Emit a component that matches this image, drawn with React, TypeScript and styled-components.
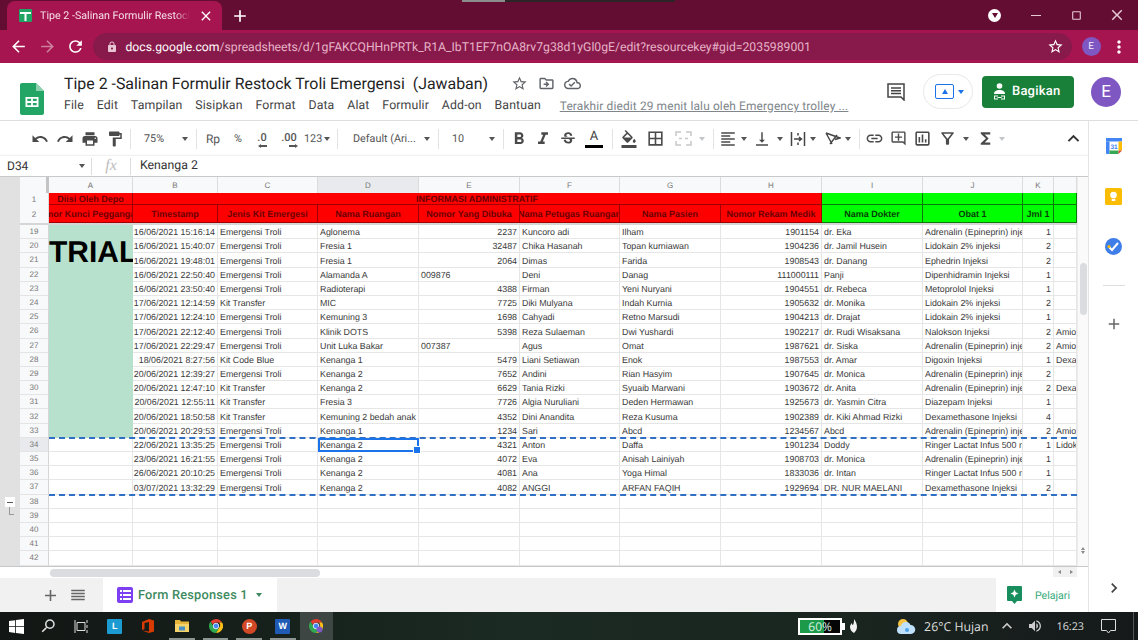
import React from "react";
import styled, { createGlobalStyle } from "styled-components";
import {
  MdAdd, MdArrowBack, MdArrowForward, MdBorderAll, MdChevronRight, MdClose, MdExpandLess, MdFormatAlignLeft,
  MdFormatBold, MdFormatColorFill, MdFormatItalic, MdFormatPaint, MdFunctions, MdLink, MdLock, MdMoreVert,
  MdOutlineAddComment, MdOutlineCloudDone, MdOutlineCropSquare, MdOutlineDriveFileMove, MdOutlineFilterAlt,
  MdOutlineInsertChart, MdPrint, MdRedo, MdRefresh, MdReorder, MdStarBorder, MdStrikethroughS, MdUndo,
  MdVerticalAlignBottom, MdSearch, MdKeyboardArrowUp, MdVolumeUp
} from "react-icons/md";

const GlobalStyle = createGlobalStyle`
  html, body { margin: 0; padding: 0; overflow: hidden; }
  body { font-family: Roboto, "Liberation Sans", sans-serif; text-rendering: geometricPrecision; }
  * { box-sizing: border-box; }
`;

const Page = styled.div`
  width: 1138px;
  height: 640px;
  display: flex;
  flex-direction: column;
  background: #fff;
  overflow: hidden;
`;

/* browser chrome */
const TabStrip = styled.div`
  height: 30px;
  flex: none;
  position: relative;
  display: flex;
  align-items: flex-end;
  padding-left: 7px;
  background: #640d33;
`;
const TopSliver = styled.div`
  position: absolute;
  top: 0;
  left: 462px;
  width: 213px;
  height: 2px;
  background: linear-gradient(90deg, #8c8c8c 20%, #2c2328 20%);
`;
const Tab = styled.div`
  width: 215px;
  height: 29px;
  display: flex;
  align-items: center;
  padding: 0 8px 0 12px;
  background: #a6154f;
  border-radius: 8px 8px 0 0;
  color: #f6dfe8;
  font-size: 10.7px;
`;
const TabTitle = styled.span`
  width: 151px;
  margin: 0 8px;
  overflow: hidden;
  white-space: nowrap;
  mask-image: linear-gradient(90deg, #000 90%, transparent);
`;
const NewTab = styled.div`
  margin: 0 0 4px 8px;
  color: #fff;
  font-size: 20px;
  display: flex;
`;
const WindowControls = styled.div`
  margin-left: auto;
  height: 30px;
  display: flex;
  align-items: center;
  color: #e7c9d5;
`;
const ProfileDot = styled.div`
  width: 13px;
  height: 13px;
  margin-right: 15px;
  border-radius: 50%;
  background: #fff;
  display: flex;
  align-items: center;
  justify-content: center;
  &::after {
    content: "";
    border-top: 5px solid #640d33;
    border-left: 3.5px solid transparent;
    border-right: 3.5px solid transparent;
  }
`;
const WinButton = styled.div<{ $w: number }>`
  width: ${(p) => p.$w}px;
  display: flex;
  align-items: center;
  justify-content: center;
`;
const MinLine = styled.div`
  width: 10px;
  height: 1px;
  background: #e7c9d5;
`;

const NavBar = styled.div`
  height: 33px;
  flex: none;
  display: flex;
  align-items: center;
  padding: 0 0 0 9px;
  background: #a6154f;
  color: #fff;
`;
const NavIcon = styled.div<{ $dim?: boolean }>`
  width: 28.5px;
  display: flex;
  font-size: 19px;
  opacity: ${(p) => (p.$dim ? 0.45 : 1)};
`;
const Omnibox = styled.div`
  margin-left: -2px;
  width: 979px;
  height: 27px;
  border-radius: 14px;
  display: flex;
  align-items: center;
  padding: 0 8px 0 13px;
  background: #881a4b;
  font-size: 12.2px;
  color: #e6b3c8;
`;
const LockIcon = styled.div`
  display: flex;
  font-size: 12px;
  color: #e6c6d3;
  margin-right: 8px;
`;
const Host = styled.span`
  color: #fff;
`;
const OmniStar = styled.div`
  margin-left: auto;
  display: flex;
  font-size: 17px;
  color: #fff;
`;
const SmallAvatar = styled.div`
  width: 19px;
  height: 19px;
  margin-left: 10px;
  border-radius: 50%;
  background: #7e57c2;
  color: #f3eefc;
  font-size: 10px;
  display: flex;
  align-items: center;
  justify-content: center;
`;
const Kebab = styled.div`
  margin-left: 8px;
  display: flex;
  font-size: 20px;
`;

/* sheets header */
const Header = styled.div`
  height: 58px;
  flex: none;
  display: flex;
  align-items: flex-start;
  border-bottom: 1px solid #dedede;
`;
const LogoSlot = styled.div`
  width: 64px;
  flex: none;
  padding: 20px 0 0 20px;
`;
const HeaderCenter = styled.div`
  padding-top: 8px;
  display: flex;
  flex-direction: column;
`;
const TitleRow = styled.div`
  height: 24px;
  display: flex;
  align-items: center;
  color: #5f6368;
`;
const Title = styled.div`
  font-size: 15.9px;
  color: #1f1f1f;
  white-space: pre;
  margin-right: 23px;
`;
const TitleIcon = styled.div`
  width: 26.5px;
  display: flex;
  font-size: 17px;
`;
const MenuRow = styled.div`
  height: 22px;
  display: flex;
  align-items: center;
  gap: 12.8px;
  font-size: 12.3px;
  letter-spacing: 0.14px;
  color: #444;
`;
const LastEdit = styled.span`
  margin-left: 6px;
  color: #80868b;
  text-decoration: underline;
  font-size: 11.9px;
`;
const HeaderRight = styled.div`
  margin-left: auto;
  height: 57px;
  padding-right: 17px;
  display: flex;
  align-items: center;
`;
const Present = styled.div`
  width: 50px;
  height: 35px;
  margin: 0 9px 0 18px;
  border: 1px solid #e8e8e8;
  border-radius: 18px;
  display: flex;
  align-items: center;
  padding-left: 11px;
  gap: 4px;
`;
const PresentBox = styled.div`
  width: 19px;
  height: 15px;
  border: 1.5px solid #1a73e8;
  border-radius: 2px;
  color: #1a73e8;
  display: flex;
  align-items: center;
  justify-content: center;
  &::after {
    content: "";
    border-bottom: 5px solid #1a73e8;
    border-left: 3.5px solid transparent;
    border-right: 3.5px solid transparent;
  }
`;
const ShareButton = styled.div`
  width: 92px;
  height: 32px;
  border-radius: 4px;
  background: #188038;
  color: #fff;
  font-size: 13px;
  font-weight: 500;
  letter-spacing: 0.2px;
  display: flex;
  align-items: center;
  gap: 6px;
  padding-left: 11px;
`;
const Avatar = styled.div`
  width: 30px;
  height: 30px;
  margin-left: 17px;
  border-radius: 50%;
  background: #7e57c2;
  color: #fff;
  font-size: 17px;
  display: flex;
  align-items: center;
  justify-content: center;
`;

/* workspace */
const Workspace = styled.div`
  flex: 1;
  min-height: 0;
  display: flex;
`;
const WorkArea = styled.div`
  width: 1088px;
  flex: none;
  display: flex;
  flex-direction: column;
`;
const Toolbar = styled.div`
  height: 35px;
  flex: none;
  display: flex;
  align-items: center;
  padding: 0 3px 0 27px;
  color: #4a4a4a;
  box-shadow: inset 0 -2px 2px -1px #eee;
`;
const Tool = styled.div<{ $w: number; $left?: boolean; $pad?: number }>`
  width: ${(p) => p.$w}px;
  height: 24px;
  flex: none;
  position: relative;
  display: flex;
  align-items: center;
  justify-content: ${(p) => (p.$left ? "flex-start" : "center")};
  padding-left: ${(p) => p.$pad ?? 0}px;
  font-size: 18px;
`;
const ToolText = styled.span<{ $pad?: number; $big?: boolean }>`
  font-size: ${(p) => (p.$big ? 12 : 10.8)}px;
  color: #555;
  padding-left: ${(p) => p.$pad ?? 0}px;
  white-space: nowrap;
`;
const Caret = styled.i<{ $light?: boolean; $blue?: boolean }>`
  display: block;
  flex: none;
  border-top: 4px solid ${(p) => (p.$blue ? "#1a73e8" : p.$light ? "#c4c7c9" : "#555")};
  border-left: 3.5px solid transparent;
  border-right: 3.5px solid transparent;
`;
const CaretEnd = styled(Caret)<{ $r?: number }>`
  position: absolute;
  right: ${(p) => p.$r ?? 5}px;
  top: 10px;
`;
const Sep = styled.div<{ $m?: number }>`
  width: 1px;
  height: 20px;
  flex: none;
  margin: 0 ${(p) => p.$m ?? 3}px;
  background: #e3e3e3;
`;
const Collapse = styled.div`
  margin-left: auto;
  width: 24px;
  display: flex;
  justify-content: center;
  font-size: 23px;
  color: #333;
`;
const DecimalWrap = styled.div`
  position: relative;
  margin-top: -3px;
  font-size: 11px;
  font-weight: 500;
  color: #555;
`;
const DecimalArrow = styled.span<{ $right?: boolean }>`
  position: absolute;
  bottom: -3px;
  left: ${(p) => (p.$right ? "8px" : "3px")};
  width: 7px;
  height: 1.5px;
  background: #555;
  &::after {
    content: "";
    position: absolute;
    top: -1.5px;
    ${(p) => (p.$right ? "right: -2px" : "left: -2px")};
    border-top: 2.2px solid transparent;
    border-bottom: 2.2px solid transparent;
    ${(p) => (p.$right ? "border-left: 3px solid #555" : "border-right: 3px solid #555")};
  }
`;
const TextColor = styled.div`
  display: flex;
  flex-direction: column;
  align-items: center;
  font-size: 13px;
  line-height: 13px;
  color: #444;
  &::after {
    content: "";
    width: 18px;
    height: 3px;
    margin-top: 2px;
    background: #000;
  }
`;
const FormulaBar = styled.div`
  height: 21px;
  flex: none;
  display: flex;
  align-items: center;
  font-size: 12px;
  color: #333;
  border-bottom: 1px solid #c9c9c9;
`;
const NameBox = styled.div`
  width: 91px;
  flex: none;
  padding: 0 6px 0 7px;
  display: flex;
  align-items: center;
  justify-content: space-between;
`;
const FxMark = styled.div`
  width: 38px;
  text-align: center;
  font: italic 16px "Liberation Serif", serif;
  color: #bdbdbd;
`;
const FormulaSep = styled.div`
  width: 1px;
  height: 17px;
  background: #ddd;
`;
const FormulaText = styled.div`
  padding-left: 9px;
  font-size: 12.3px;
`;

/* grid */
const SheetRow = styled.div`
  height: 389px;
  flex: none;
  display: flex;
`;
const OutlineGutter = styled.div`
  width: 20px;
  flex: none;
  padding: 320px 0 0 5px;
  background: #e1e1e1;
`;
const OutlineMinus = styled.div`
  width: 10px;
  height: 10px;
  background: #fff;
  display: flex;
  align-items: center;
  justify-content: center;
  &::after {
    content: "";
    width: 6px;
    height: 1px;
    background: #555;
  }
`;
const OutlineTail = styled.div`
  width: 5px;
  height: 8px;
  margin-left: 4px;
  border-left: 1px solid #999;
  border-bottom: 1px solid #999;
`;
const SheetBody = styled.div`
  width: 1057px;
  flex: none;
  display: flex;
  flex-direction: column;
`;
const columns = "29px 84px 85px 100px 101px 101px 100px 101px 101px 101px 100px 31px 23px";
const HeaderGrid = styled.div`
  display: grid;
  grid-template-columns: ${columns};
  grid-template-rows: 16px 12px 18px;
  font-family: "Liberation Sans", Arial, sans-serif;
  border-bottom: 2px solid #d6d6d6;
  height: 48px;
`;
const Corner = styled.div`
  background: #f8f9fa;
  border-right: 3px solid #c4c4c4;
`;
const ColLetter = styled.div<{ $on?: boolean }>`
  display: flex;
  align-items: center;
  justify-content: center;
  font-size: 8px;
  color: #777;
  background: ${(p) => (p.$on ? "#e8eaed" : "#f8f9fa")};
  border-right: 1px solid #dcdcdc;
`;
const HeadNum = styled.div`
  display: flex;
  align-items: center;
  justify-content: center;
  font-size: 8px;
  color: #777;
  background: #f8f9fa;
  border-right: 1px solid #dcdcdc;
`;
const HeadCell = styled.div<{ $green?: boolean; $span?: number; $nudge?: number }>`
  grid-column: span ${(p) => p.$span ?? 1};
  display: flex;
  align-items: center;
  justify-content: center;
  padding: 1px ${(p) => p.$nudge ?? 0}px 0 0;
  overflow: hidden;
  white-space: nowrap;
  font-size: 9px;
  font-weight: bold;
  color: ${(p) => (p.$green ? "#063f06" : "#6b0000")};
  background: ${(p) => (p.$green ? "#00ff00" : "#ff0000")};
  border-right: 1px solid ${(p) => (p.$green ? "#0b7a0b" : "#a00000")};
  border-bottom: 1px solid ${(p) => (p.$green ? "#0b7a0b" : "#a00000")};
`;
const DataWrap = styled.div`
  position: relative;
`;
const DataGrid = styled.div`
  display: grid;
  grid-template-columns: ${columns};
  grid-auto-rows: 14.2px;
  font-family: "Liberation Sans", Arial, sans-serif;
  font-size: 8.85px;
  line-height: 12px;
  color: #3a3a3a;
`;
const RowNum = styled.div<{ $on?: boolean }>`
  display: flex;
  align-items: center;
  justify-content: center;
  padding-top: 1px;
  font-size: 8px;
  color: #777;
  background: ${(p) => (p.$on ? "#e8eaed" : "#f8f9fa")};
  border-right: 1px solid #d5d5d5;
  border-bottom: 1px solid #e4e4e4;
`;
const Cell = styled.div<{ $right?: boolean; $active?: boolean }>`
  position: relative;
  display: flex;
  align-items: flex-end;
  justify-content: ${(p) => (p.$right ? "flex-end" : "flex-start")};
  padding: 0 2px;
  white-space: nowrap;
  min-width: 0;
  overflow: ${(p) => (p.$active ? "visible" : "hidden")};
  border-right: 1px solid #e6e6e6;
  border-bottom: 1px solid #e6e6e6;
  ${(p) =>
    p.$active &&
    `
    z-index: 2;
    outline: 2px solid #1a73e8;
    outline-offset: -2px;
    &::after {
      content: "";
      position: absolute;
      right: -3px;
      bottom: -3px;
      width: 6px;
      height: 6px;
      background: #1a73e8;
      border: 1px solid #fff;
    }
  `}
`;
const MergedTrial = styled.div`
  grid-row: span 15;
  background: #b7e1cd;
  padding-top: 13px;
  font-size: 30px;
  line-height: 30px;
  font-weight: bold;
  color: #000;
  overflow: hidden;
  white-space: nowrap;
`;
const CopyLine = styled.div<{ $row: number }>`
  position: absolute;
  z-index: 1;
  left: 29px;
  right: 0;
  top: ${(p) => p.$row * 14.2 - 1}px;
  border-top: 2px dashed #2f6fc4;
`;
const VScroll = styled.div`
  width: 11px;
  flex: none;
  display: flex;
  flex-direction: column;
  align-items: center;
  padding-top: 86px;
  background: #fafafa;
  border-left: 1px solid #ececec;
`;
const VThumb = styled.div`
  width: 7px;
  height: 52px;
  border-radius: 4px;
  background: #dadce0;
`;
const VArrows = styled.div`
  margin-top: auto;
  height: 26px;
  display: flex;
  flex-direction: column;
  justify-content: space-between;
  align-items: center;
  padding: 7px 0 12px;
`;
const TinyUp = styled.i`
  border-bottom: 3px solid #888;
  border-left: 2.5px solid transparent;
  border-right: 2.5px solid transparent;
`;
const TinyDown = styled.i`
  border-top: 3px solid #888;
  border-left: 2.5px solid transparent;
  border-right: 2.5px solid transparent;
`;
const HScrollRow = styled.div`
  height: 12px;
  flex: none;
  display: flex;
  padding: 2px 0 1px 50px;
  background: #fff;
  border-top: 1px solid #c8c8c8;
`;
const HThumb = styled.div`
  width: 270px;
  height: 8px;
  border-radius: 4px;
  background: #dadce0;
`;
const HArrows = styled.div`
  margin: -2px 11px 0 auto;
  width: 24px;
  display: flex;
  align-items: center;
  justify-content: space-around;
  background: #f1f1f1;
`;
const TinyLeft = styled.i`
  border-right: 3px solid #888;
  border-top: 2.5px solid transparent;
  border-bottom: 2.5px solid transparent;
`;
const TinyRight = styled.i`
  border-left: 3px solid #888;
  border-top: 2.5px solid transparent;
  border-bottom: 2.5px solid transparent;
`;

/* sheet tabs */
const TabsBar = styled.div`
  height: 34px;
  flex: none;
  display: flex;
  align-items: stretch;
  background: #f1f1f1;
`;
const TabsTool = styled.div<{ $w: number; $ml?: number }>`
  width: ${(p) => p.$w}px;
  margin-left: ${(p) => p.$ml ?? 0}px;
  flex: none;
  display: flex;
  align-items: center;
  justify-content: center;
  font-size: 18px;
  color: #666;
`;
const SheetTab = styled.div`
  width: 174px;
  margin-left: 12px;
  display: flex;
  align-items: center;
  padding-left: 14px;
  background: #fff;
  color: #3e8a60;
  font-size: 12.8px;
  font-weight: 500;
  letter-spacing: 0.2px;
`;
const FormBadge = styled.div`
  width: 16px;
  height: 16px;
  margin-right: 5px;
  border-radius: 2px;
  background: #7e3ff2;
  color: #fff;
  display: flex;
  align-items: center;
  justify-content: center;
`;
const GreenCaret = styled(Caret)`
  margin-left: 8px;
  border-top-color: #3e8a60;
`;
const LearnBox = styled.div`
  width: 92px;
  margin-left: auto;
  display: flex;
  align-items: center;
  padding-left: 11px;
  background: #fff;
  color: #34a87a;
  font-size: 10.6px;
  gap: 13px;
`;

/* side panel */
const SidePanel = styled.div`
  flex: 1;
  display: flex;
  flex-direction: column;
  align-items: center;
  padding-top: 17px;
  border-left: 1px solid #e4e4e4;
`;
const SideIcon = styled.div<{ $mb: number }>`
  display: flex;
  margin-bottom: ${(p) => p.$mb}px;
`;
const SideDivider = styled.div`
  width: 22px;
  height: 1px;
  background: #e0e0e0;
  margin-bottom: 29px;
`;
const SidePlus = styled.div`
  display: flex;
  font-size: 18px;
  color: #666;
`;
const SideChevron = styled.div`
  margin-top: auto;
  margin-bottom: 14px;
  display: flex;
  font-size: 20px;
  color: #444;
`;

/* windows taskbar */
const Taskbar = styled.div`
  height: 28px;
  flex: none;
  display: flex;
  align-items: center;
  background: linear-gradient(90deg, #121614, #1b2a23 45%, #1a2520 75%, #15191a);
  color: #eee;
`;
const TaskSlot = styled.div<{ $w?: number; $active?: boolean; $run?: boolean }>`
  position: relative;
  width: ${(p) => p.$w ?? 33.6}px;
  height: 28px;
  flex: none;
  display: flex;
  align-items: center;
  justify-content: center;
  background: ${(p) => (p.$active ? "#3d4643" : "transparent")};
  ${(p) =>
    p.$run &&
    `
    &::after {
      content: "";
      position: absolute;
      left: 4px;
      right: 4px;
      bottom: 0;
      height: 2px;
      background: #8d9692;
    }
  `}
`;
const AppTile = styled.div<{ $bg: string; $round?: boolean }>`
  width: 15px;
  height: 15px;
  display: flex;
  align-items: center;
  justify-content: center;
  background: ${(p) => p.$bg};
  border-radius: ${(p) => (p.$round ? "50%" : "1px")};
  color: #fff;
  font: bold 9px "Liberation Sans", sans-serif;
`;
const SearchGlass = styled.div`
  display: flex;
  color: #ddd;
  transform: scaleX(-1);
`;
const Tray = styled.div`
  margin-left: auto;
  display: flex;
  align-items: center;
  height: 28px;
  padding-right: 4px;
`;
const Battery = styled.div`
  width: 44px;
  height: 17px;
  border: 2px solid #fff;
  background: linear-gradient(90deg, #1c9a4a 60%, #050505 60%);
  font: 12px "Open Sans", sans-serif;
  color: #d8efe0;
  display: flex;
  align-items: center;
  justify-content: center;
`;
const BatteryCap = styled.div`
  width: 3px;
  height: 7px;
  background: #fff;
`;
const TrayText = styled.div<{ $ml: number; $size?: number }>`
  margin-left: ${(p) => p.$ml}px;
  font: ${(p) => p.$size ?? 13}px "Open Sans", sans-serif;
  color: #ddd;
  white-space: nowrap;
`;
const TrayIcon = styled.div<{ $ml: number; $size?: number }>`
  margin-left: ${(p) => p.$ml}px;
  display: flex;
  font-size: ${(p) => p.$size ?? 16}px;
  color: #ccc;
`;
const TrayEdge = styled.div`
  width: 1px;
  height: 28px;
  margin-left: 17px;
  background: #555;
`;

const SheetsLogo = () => (
  <svg width="24" height="32" viewBox="0 0 24 32">
    <path d="M2 0h14l8 8v22a2 2 0 0 1-2 2H2a2 2 0 0 1-2-2V2a2 2 0 0 1 2-2z" fill="#23a566" />
    <path d="M16 0l8 8h-8z" fill="#8ed1b1" />
    <path d="M5.500 14h13v10h-13zM7.300 15.700v2.400h3.800v-2.400zm5.600 0v2.400h3.800v-2.400zm-5.600 4.200v2.400h3.800v-2.400zm5.600 0v2.400h3.800v-2.400z" fill="#fff" fillRule="evenodd" />
  </svg>
);
const SheetsFavicon = () => (
  <svg width="13" height="13" viewBox="0 0 13 13" style={{ flex: "none" }}>
    <rect width="13" height="13" rx="1" fill="#1fa463" />
    <path d="M1 3h11v2H7.500v7h-2V5H1z" fill="#fff" />
  </svg>
);
const MergeIcon = () => (
  <svg width="17" height="15" viewBox="0 0 17 15" fill="none" stroke="#c6c8ca" strokeWidth="1.500">
    <path d="M1 5V1h5M11 1h5v4M1 10v4h5M11 14h5v-4M4 7.500h3M13 7.500h-3" />
  </svg>
);
const WrapIcon = () => (
  <svg width="16" height="16" viewBox="0 0 16 16" fill="none" stroke="#444" strokeWidth="1.500">
    <path d="M1.500 1v14M14.500 1v14M4 8h7M9 6l2.500 2L9 10M8 2v2.500M8 11.500V14" />
  </svg>
);
const RotateIcon = () => (
  <svg width="17" height="15" viewBox="0 0 17 15" fill="none" stroke="#444" strokeWidth="1.400">
    <path d="M2 2l14 5-5 1.500M2 2l6 11M6 13l7-9" />
  </svg>
);
const CommentIcon = () => (
  <svg width="18" height="18" viewBox="0 0 18 18" fill="none" stroke="#444" strokeWidth="1.500">
    <path d="M1 1h16v16l-3-3H1z" />
    <path d="M4 5h10M4 7.800h10M4 10.600h10" />
  </svg>
);
const ShareIcon = () => (
  <svg width="13" height="17" viewBox="0 0 13 17" fill="#fff">
    <circle cx="6.500" cy="3" r="2.800" />
    <path d="M1 11c0-3 2.500-4 5.500-4s5.500 1 5.500 4z" />
    <path d="M1 12.500h4v1H2v2h3v1H1zm7 0h4v4H8v-1h3v-2H8zM4.500 14h4v1h-4z" />
  </svg>
);
const Calendar = () => (
  <svg width="16" height="16" viewBox="0 0 16 16">
    <rect width="16" height="16" rx="1" fill="#fff" />
    <path d="M0 0h16v3.500H0z" fill="#4285f4" />
    <path d="M0 3.500h3.500V16H1a1 1 0 0 1-1-1z" fill="#4285f4" />
    <path d="M12.500 3.500H16v9h-3.500z" fill="#fbbc04" />
    <path d="M3.500 12.500h9V16h-9z" fill="#34a853" />
    <path d="M12.500 12.500H16L12.500 16z" fill="#ea4335" />
    <text x="8" y="10.500" fontSize="6.500" fontWeight="bold" textAnchor="middle" fill="#4285f4" fontFamily="Liberation Sans">31</text>
  </svg>
);
const Keep = () => (
  <svg width="17" height="17" viewBox="0 0 17 17">
    <rect width="17" height="17" rx="1.500" fill="#fbbc04" />
    <circle cx="8.500" cy="7" r="3.300" fill="#fff" />
    <rect x="6.700" y="10.800" width="3.600" height="2.200" fill="#fff" />
  </svg>
);
const Tasks = () => (
  <svg width="17" height="17" viewBox="0 0 17 17">
    <circle cx="8.500" cy="8.500" r="8.500" fill="#3f7ee8" />
    <path d="M4 9l3 3 6-7" fill="none" stroke="#fff" strokeWidth="2" />
    <circle cx="4" cy="8.500" r="1.500" fill="#fbbc04" />
  </svg>
);
const LearnIcon = () => (
  <svg width="15" height="18" viewBox="0 0 15 18">
    <path d="M1 0h13a1 1 0 0 1 1 1v13a1 1 0 0 1-1 1h-4l-2.500 3L5 15H1a1 1 0 0 1-1-1V1a1 1 0 0 1 1-1z" fill="#188e5f" />
    <path d="M7.500 3.500l1.200 2.800 2.800 1.200-2.800 1.200-1.200 2.800-1.200-2.800-2.800-1.200 2.800-1.200z" fill="#fff" />
  </svg>
);
const WindowsLogo = () => (
  <svg width="15" height="15" viewBox="0 0 15 15" fill="#fff">
    <path d="M0 2.100l6.200-.9v6H0zM7 1.100L15 0v7.200H7zM0 8h6.200v6L0 13.100zM7 8h8v7l-8-1.100z" />
  </svg>
);
const TaskView = () => (
  <svg width="15" height="15" viewBox="0 0 15 15" fill="none" stroke="#ddd" strokeWidth="1">
    <path d="M3 3.500h8v8H3zM1 1v13M13 1v3M13 6v3M13 11v3" />
  </svg>
);
const OfficeIcon = () => (
  <svg width="12" height="14" viewBox="0 0 12 14">
    <path d="M0 3l7-3 5 1.500v11L7 14l-7-2.500 7 1V3L2.500 4v6L0 11z" fill="#d83b01" />
  </svg>
);
const FolderIcon = () => (
  <svg width="14" height="12" viewBox="0 0 14 12">
    <path d="M0 0h5l1 1.500h8V12H0z" fill="#e8b43a" />
    <path d="M0 4h14v8H0z" fill="#f6d36b" />
    <rect x="4" y="6.500" width="6" height="4" fill="#4a90c2" />
  </svg>
);
const ChromeIcon = ({ badge }: { badge?: boolean }) => (
  <svg width="14" height="14" viewBox="0 0 14 14">
    <path d="M7 0a7 7 0 0 1 6.100 3.500H7A3.500 3.500 0 0 0 3.800 5.600L1.600 2.600A7 7 0 0 1 7 0z" fill="#e33b2e" />
    <path d="M13.100 3.500A7 7 0 0 1 7 14l3-5.200a3.500 3.500 0 0 0 0-5.300z" fill="#fbc116" />
    <path d="M7 14A7 7 0 0 1 1.600 2.600l3 5.400A3.500 3.500 0 0 0 10 8.800z" fill="#2fa84f" />
    <circle cx="7" cy="7" r="2.800" fill="#4285f4" stroke="#fff" strokeWidth="0.800" />
    {badge && <circle cx="10.500" cy="10.500" r="3" fill="#7e57c2" />}
  </svg>
);
const Leaf = () => (
  <svg width="7" height="14" viewBox="0 0 7 14">
    <path d="M4 0c2 3 3 5 3 8 0 3-2 5-3 6-2-1-4-3-4-6 0-2 1-3 2-4 0 1 0 2 1 2 1-2 1-4 1-6z" fill="#f2f2f2" />
  </svg>
);
const Cloud = () => (
  <svg width="20" height="17" viewBox="0 0 20 17">
    <circle cx="7" cy="6" r="5" fill="#f6c445" />
    <path d="M5 16a4 4 0 0 1 0-8 5 5 0 0 1 9.500-1A4.500 4.500 0 0 1 15 16z" fill="#bfe0fb" />
    <circle cx="11" cy="12" r="2" fill="#4fa3ea" />
  </svg>
);
const NotifyIcon = () => (
  <svg width="15" height="15" viewBox="0 0 15 15" fill="none" stroke="#ddd" strokeWidth="1">
    <path d="M.5.500h14v11H9.500L7.500 14l-2-2.500H.5z" />
  </svg>
);
const FormLines = () => (
  <svg width="11" height="10" viewBox="0 0 11 10" fill="#fff">
    <path d="M0 0h2v2H0zM3 0h8v2H3zM0 4h2v2H0zM3 4h8v2H3zM0 8h2v2H0zM3 8h8v2H3z" />
  </svg>
);

const ET = "Emergensi Troli";
const KT = "Kit Transfer";
const ADR = "Adrenalin (Epineprin) injeksi";
const LID = "Lidokain 2% injeksi";
const RL = "Ringer Lactat Infus 500 ml";
const DEX = "Dexamethasone Injeksi";

const rows: string[][] = [
  ["16/06/2021 15:16:14", ET, "Aglonema", "2237", "Kuncoro adi", "Ilham", "1901154", "dr. Eka", ADR, "1", ""],
  ["16/06/2021 15:40:07", ET, "Fresia 1", "32487", "Chika Hasanah", "Topan kurniawan", "1904236", "dr. Jamil Husein", LID, "2", ""],
  ["16/06/2021 19:48:01", ET, "Fresia 1", "2064", "Dimas", "Farida", "1908543", "dr. Danang", "Ephedrin Injeksi", "2", ""],
  ["16/06/2021 22:50:40", ET, "Alamanda A", "009876", "Deni", "Danag", "111000111", "Panji", "Dipenhidramin Injeksi", "1", ""],
  ["16/06/2021 23:50:40", ET, "Radioterapi", "4388", "Firman", "Yeni Nuryani", "1904551", "dr. Rebeca", "Metoprolol Injeksi", "1", ""],
  ["17/06/2021 12:14:59", KT, "MIC", "7725", "Diki Mulyana", "Indah Kurnia", "1905632", "dr. Monika", LID, "2", ""],
  ["17/06/2021 12:24:10", ET, "Kemuning 3", "1698", "Cahyadi", "Retno Marsudi", "1904213", "dr. Drajat", LID, "1", ""],
  ["17/06/2021 22:12:40", ET, "Klinik DOTS", "5398", "Reza Sulaeman", "Dwi Yushardi", "1902217", "dr. Rudi Wisaksana", "Nalokson Injeksi", "2", "Amiodaron"],
  ["17/06/2021 22:29:47", ET, "Unit Luka Bakar", "007387", "Agus", "Omat", "1987621", "dr. Siska", ADR, "2", "Amiodaron"],
  ["18/06/2021 8:27:56", "Kit Code Blue", "Kenanga 1", "5479", "Liani Setiawan", "Enok", "1987553", "dr. Amar", "Digoxin Injeksi", "1", "Dexamethasone"],
  ["20/06/2021 12:39:27", ET, "Kenanga 2", "7652", "Andini", "Rian Hasyim", "1907645", "dr. Monica", ADR, "2", ""],
  ["20/06/2021 12:47:10", KT, "Kenanga 2", "6629", "Tania Rizki", "Syuaib Marwani", "1903672", "dr. Anita", ADR, "2", "Dexamethasone"],
  ["20/06/2021 12:55:11", KT, "Fresia 3", "7726", "Algia Nuruliani", "Deden Hermawan", "1925673", "dr. Yasmin Citra", "Diazepam Injeksi", "1", ""],
  ["20/06/2021 18:50:58", KT, "Kemuning 2 bedah anak", "4352", "Dini Anandita", "Reza Kusuma", "1902389", "dr. Kiki Ahmad Rizki", DEX, "4", ""],
  ["20/06/2021 20:29:53", ET, "Kenanga 1", "1234", "Sari", "Abcd", "1234567", "Abcd", ADR, "2", "Amiodaron"],
  ["22/06/2021 13:35:25", ET, "Kenanga 2", "4321", "Anton", "Daffa", "1901234", "Doddy", RL, "1", "Lidokain"],
  ["23/06/2021 16:21:55", ET, "Kenanga 2", "4072", "Eva", "Anisah Lainiyah", "1908703", "dr. Monica", ADR, "1", ""],
  ["26/06/2021 20:10:25", ET, "Kenanga 2", "4081", "Ana", "Yoga Himal", "1833036", "dr. Intan", RL, "1", ""],
  ["03/07/2021 13:32:29", ET, "Kenanga 2", "4082", "ANGGI", "ARFAN FAQIH", "1929694", "DR. NUR MAELANI", DEX, "2", ""],
];

const letters = ["A", "B", "C", "D", "E", "F", "G", "H", "I", "J", "K", ""];
const menus = ["File", "Edit", "Tampilan", "Sisipkan", "Format", "Data", "Alat", "Formulir", "Add-on", "Bantuan"];
const rightCols = [0, 3, 6, 9];

function DataRows() {
  const out: React.ReactNode[] = [];
  rows.forEach((r, i) => {
    const n = i + 19;
    out.push(<RowNum key={`n${n}`} $on={n === 34}>{n}</RowNum>);
    if (n === 19) out.push(<MergedTrial key="trial">TRIAL</MergedTrial>);
    if (n > 33) out.push(<Cell key={`a${n}`} />);
    r.forEach((v, c) => (
      out.push(
        <Cell
          key={`${n}-${c}`}
          $right={rightCols.includes(c) && !v.startsWith("00")}
          $active={n === 34 && c === 2}
        >
          {v}
        </Cell>
      )
    ));
  });
  for (let n = 38; n <= 42; n++) {
    out.push(<RowNum key={`n${n}`}>{n}</RowNum>);
    for (let c = 0; c < 12; c++) out.push(<Cell key={`${n}-${c}`} />);
  }
  return <DataGrid>{out}</DataGrid>;
}

function SheetToolbar() {
  return (
    <Toolbar>
      <Tool $w={25}><MdUndo /></Tool>
      <Tool $w={25}><MdRedo /></Tool>
      <Tool $w={25}><MdPrint /></Tool>
      <Tool $w={25}><MdFormatPaint /></Tool>
      <Sep />
      <Tool $w={59} $left><ToolText $pad={10}>75%</ToolText><CaretEnd /></Tool>
      <Sep />
      <Tool $w={26}><ToolText $big>Rp</ToolText></Tool>
      <Tool $w={24}><ToolText>%</ToolText></Tool>
      <Tool $w={24}><DecimalWrap>.0<DecimalArrow /></DecimalWrap></Tool>
      <Tool $w={30}><DecimalWrap>.00<DecimalArrow $right /></DecimalWrap></Tool>
      <Tool $w={29} $left><ToolText>123</ToolText><CaretEnd $r={3} /></Tool>
      <Sep $m={4} />
      <Tool $w={93} $left><ToolText $pad={11}>Default (Ari...</ToolText><CaretEnd /></Tool>
      <Sep />
      <Tool $w={58} $left><ToolText $pad={10}>10</ToolText><CaretEnd /></Tool>
      <Sep />
      <Tool $w={24}><MdFormatBold size={20} /></Tool>
      <Tool $w={24}><MdFormatItalic size={20} /></Tool>
      <Tool $w={25}><MdStrikethroughS size={18} /></Tool>
      <Tool $w={28}><TextColor>A</TextColor></Tool>
      <Sep $m={4} />
      <Tool $w={23}><MdFormatColorFill /></Tool>
      <Tool $w={30}><MdBorderAll size={19} /></Tool>
      <Tool $w={40} $left $pad={5}><MergeIcon /><CaretEnd $light /></Tool>
      <Sep />
      <Tool $w={35} $left $pad={2}><MdFormatAlignLeft size={18} /><CaretEnd /></Tool>
      <Tool $w={36} $left $pad={1}><MdVerticalAlignBottom size={18} /><CaretEnd /></Tool>
      <Tool $w={34} $left $pad={2}><WrapIcon /><CaretEnd $r={6} /></Tool>
      <Tool $w={34} $left $pad={2}><RotateIcon /><CaretEnd /></Tool>
      <Sep $m={2.5} />
      <Tool $w={24}><MdLink size={19} /></Tool>
      <Tool $w={24}><MdOutlineAddComment size={17} /></Tool>
      <Tool $w={25}><MdOutlineInsertChart size={19} /></Tool>
      <Tool $w={39} $left $pad={3}><MdOutlineFilterAlt size={19} /><CaretEnd /></Tool>
      <Tool $w={35} $left $pad={2}><MdFunctions size={19} /><CaretEnd $light $r={4} /></Tool>
      <Collapse><MdExpandLess /></Collapse>
    </Toolbar>
  );
}

function Sheet() {
  return (
    <SheetRow>
      <OutlineGutter>
        <OutlineMinus />
        <OutlineTail />
      </OutlineGutter>
      <SheetBody>
        <HeaderGrid>
          <Corner />
          {letters.map((l, i) => <ColLetter key={i} $on={l === "D"}>{l}</ColLetter>)}
          <HeadNum>1</HeadNum>
          <HeadCell>Diisi Oleh Depo</HeadCell>
          <HeadCell $span={7}>INFORMASI ADMINISTRATIF</HeadCell>
          <HeadCell $green />
          <HeadCell $green />
          <HeadCell $green />
          <HeadCell $green />
          <HeadNum>2</HeadNum>
          <HeadCell $nudge={7}>Nomor Kunci Peggangan</HeadCell>
          <HeadCell>Timestamp</HeadCell>
          <HeadCell>Jenis Kit Emergesi</HeadCell>
          <HeadCell>Nama Ruangan</HeadCell>
          <HeadCell>Nomor Yang Dibuka</HeadCell>
          <HeadCell>Nama Petugas Ruangan</HeadCell>
          <HeadCell>Nama Pasien</HeadCell>
          <HeadCell>Nomor Rekam Medik</HeadCell>
          <HeadCell $green>Nama Dokter</HeadCell>
          <HeadCell $green>Obat 1</HeadCell>
          <HeadCell $green>Jml 1</HeadCell>
          <HeadCell $green />
        </HeaderGrid>
        <DataWrap>
          <DataRows />
          <CopyLine $row={15} />
          <CopyLine $row={19} />
        </DataWrap>
      </SheetBody>
      <VScroll>
        <VThumb />
        <VArrows><TinyUp /><TinyDown /></VArrows>
      </VScroll>
    </SheetRow>
  );
}

export default function App() {
  return (
    <Page>
      <GlobalStyle />
      <TabStrip>
        <TopSliver />
        <Tab>
          <SheetsFavicon />
          <TabTitle>Tipe 2 -Salinan Formulir Restock Troli</TabTitle>
          <MdClose size={16} color="#fff" />
        </Tab>
        <NewTab><MdAdd /></NewTab>
        <WindowControls>
          <ProfileDot />
          <WinButton $w={40}><MinLine /></WinButton>
          <WinButton $w={40}><MdOutlineCropSquare size={13} /></WinButton>
          <WinButton $w={42}><MdClose size={18} /></WinButton>
        </WindowControls>
      </TabStrip>
      <NavBar>
        <NavIcon><MdArrowBack /></NavIcon>
        <NavIcon $dim><MdArrowForward /></NavIcon>
        <NavIcon><MdRefresh /></NavIcon>
        <Omnibox>
          <LockIcon><MdLock /></LockIcon>
          <span><Host>docs.google.com</Host>/spreadsheets/d/1gFAKCQHHnPRTk_R1A_IbT1EF7nOA8rv7g38d1yGl0gE/edit?resourcekey#gid=2035989001</span>
          <OmniStar><MdStarBorder /></OmniStar>
        </Omnibox>
        <SmallAvatar>E</SmallAvatar>
        <Kebab><MdMoreVert /></Kebab>
      </NavBar>
      <Header>
        <LogoSlot><SheetsLogo /></LogoSlot>
        <HeaderCenter>
          <TitleRow>
            <Title>Tipe 2 -Salinan Formulir Restock Troli Emergensi  (Jawaban)</Title>
            <TitleIcon><MdStarBorder /></TitleIcon>
            <TitleIcon><MdOutlineDriveFileMove /></TitleIcon>
            <TitleIcon><MdOutlineCloudDone /></TitleIcon>
          </TitleRow>
          <MenuRow>
            {menus.map((m) => <span key={m}>{m}</span>)}
            <LastEdit>Terakhir diedit 29 menit lalu oleh Emergency trolley ...</LastEdit>
          </MenuRow>
        </HeaderCenter>
        <HeaderRight>
          <CommentIcon />
          <Present>
            <PresentBox />
            <Caret $blue />
          </Present>
          <ShareButton><ShareIcon />Bagikan</ShareButton>
          <Avatar>E</Avatar>
        </HeaderRight>
      </Header>
      <Workspace>
        <WorkArea>
          <SheetToolbar />
          <FormulaBar>
            <NameBox>D34<Caret /></NameBox>
            <FormulaSep />
            <FxMark>fx</FxMark>
            <FormulaSep />
            <FormulaText>Kenanga 2</FormulaText>
          </FormulaBar>
          <Sheet />
          <HScrollRow>
            <HThumb />
            <HArrows><TinyLeft /><TinyRight /></HArrows>
          </HScrollRow>
          <TabsBar>
            <TabsTool $w={28} $ml={36}><MdAdd size={19} /></TabsTool>
            <TabsTool $w={27}><MdReorder size={18} /></TabsTool>
            <SheetTab>
              <FormBadge><FormLines /></FormBadge>
              Form Responses 1
              <GreenCaret />
            </SheetTab>
            <LearnBox><LearnIcon />Pelajari</LearnBox>
          </TabsBar>
        </WorkArea>
        <SidePanel>
          <SideIcon $mb={34}><Calendar /></SideIcon>
          <SideIcon $mb={33}><Keep /></SideIcon>
          <SideIcon $mb={30}><Tasks /></SideIcon>
          <SideDivider />
          <SidePlus><MdAdd /></SidePlus>
          <SideChevron><MdChevronRight /></SideChevron>
        </SidePanel>
      </Workspace>
      <Taskbar>
        <TaskSlot $w={32}><WindowsLogo /></TaskSlot>
        <TaskSlot $w={32}><SearchGlass><MdSearch size={18} /></SearchGlass></TaskSlot>
        <TaskSlot $w={34}><TaskView /></TaskSlot>
        <TaskSlot><AppTile $bg="#1b9bd1">L</AppTile></TaskSlot>
        <TaskSlot><OfficeIcon /></TaskSlot>
        <TaskSlot $run><FolderIcon /></TaskSlot>
        <TaskSlot $run><ChromeIcon /></TaskSlot>
        <TaskSlot $run><AppTile $bg="#d24726" $round>P</AppTile></TaskSlot>
        <TaskSlot $run><AppTile $bg="#1f5bb5">W</AppTile></TaskSlot>
        <TaskSlot $active><ChromeIcon badge /></TaskSlot>
        <Tray>
          <Battery>60%</Battery>
          <BatteryCap />
          <TrayIcon $ml={5}><Leaf /></TrayIcon>
          <TrayIcon $ml={39}><Cloud /></TrayIcon>
          <TrayText $ml={8} $size={12.3}>26°C Hujan</TrayText>
          <TrayIcon $ml={9} $size={20}><MdKeyboardArrowUp /></TrayIcon>
          <TrayIcon $ml={10}><MdVolumeUp /></TrayIcon>
          <TrayText $ml={13} $size={10.8}>16:23</TrayText>
          <TrayIcon $ml={17}><NotifyIcon /></TrayIcon>
          <TrayEdge />
        </Tray>
      </Taskbar>
    </Page>
  );
}
